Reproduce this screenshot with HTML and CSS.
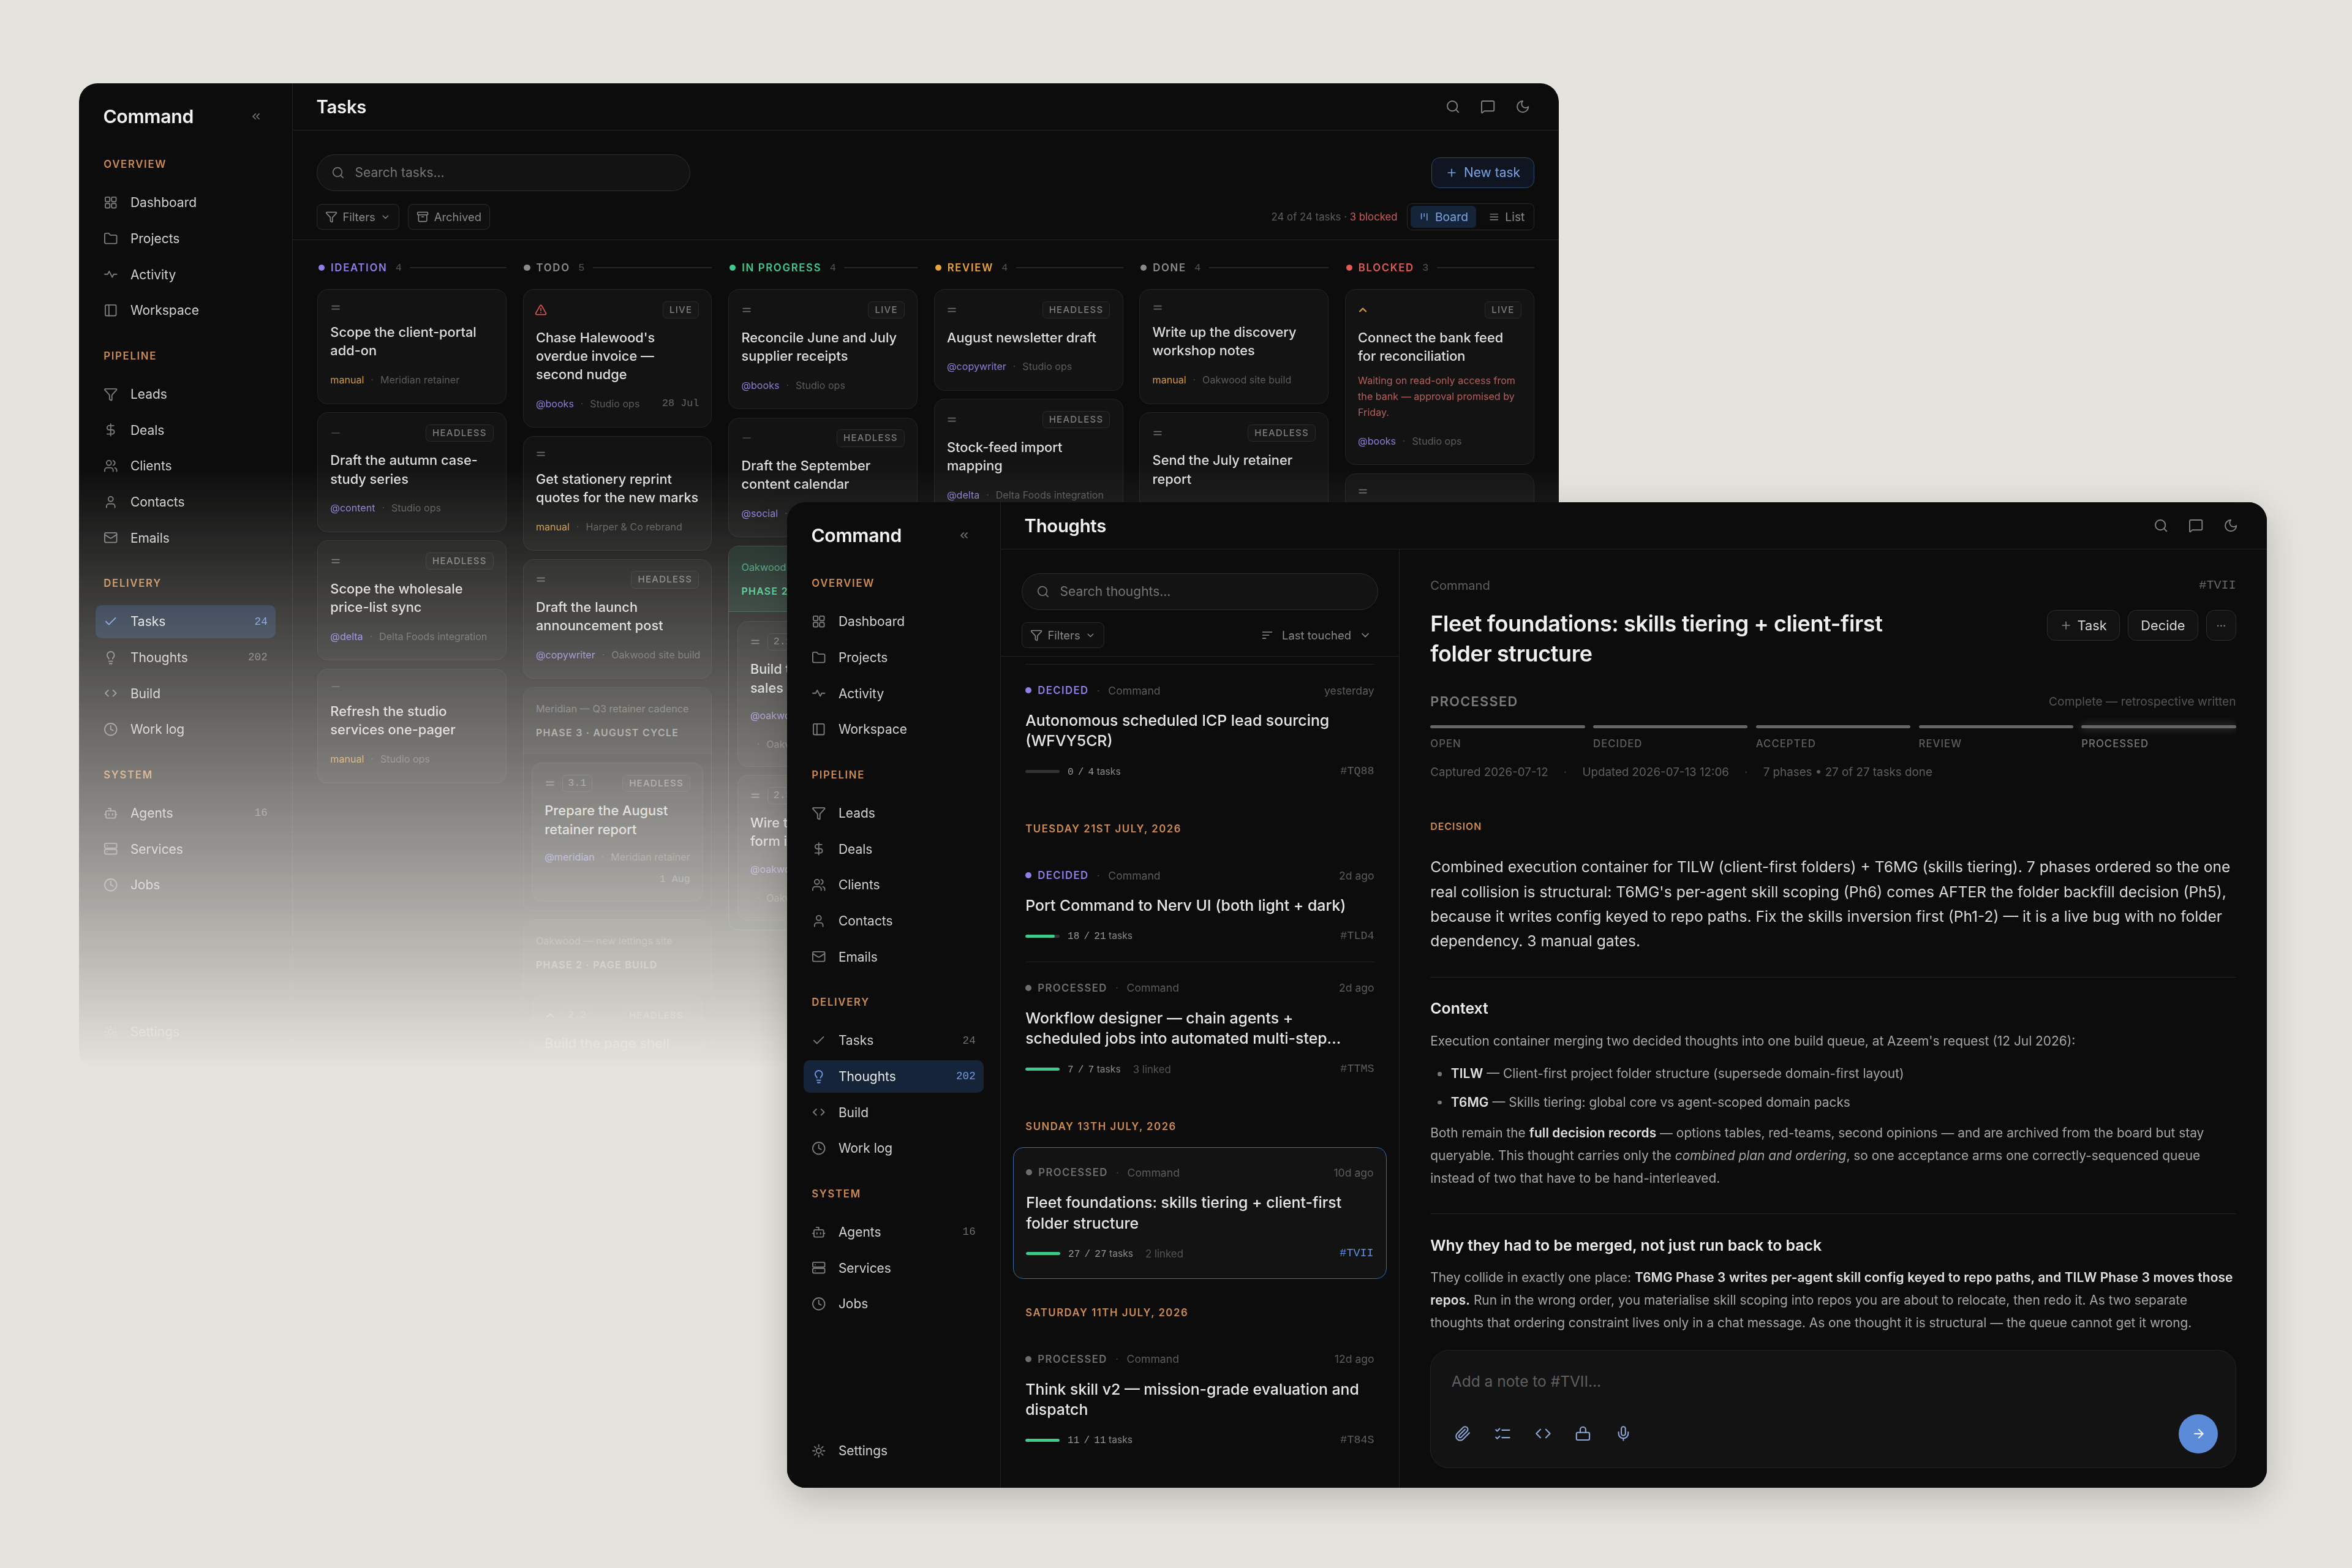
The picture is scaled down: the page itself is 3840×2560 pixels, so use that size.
FILE: index.html
```html
<!DOCTYPE html>
<html lang="en">
<head>
<meta charset="utf-8">
<title>Command</title>
<link rel="stylesheet" href="styles.css">
</head>
<body>
<svg class="sprite" xmlns="http://www.w3.org/2000/svg">
  <symbol id="i-dash" viewBox="0 0 24 24"><rect x="3" y="3" width="7.5" height="7.5" rx="1.5"/><rect x="13.5" y="3" width="7.5" height="7.5" rx="1.5"/><rect x="13.5" y="13.5" width="7.5" height="7.5" rx="1.5"/><rect x="3" y="13.5" width="7.5" height="7.5" rx="1.5"/></symbol>
  <symbol id="i-folder" viewBox="0 0 24 24"><path d="M20 20a2 2 0 0 0 2-2V8a2 2 0 0 0-2-2h-7.9a2 2 0 0 1-1.69-.9L9.6 3.9A2 2 0 0 0 7.93 3H4a2 2 0 0 0-2 2v13a2 2 0 0 0 2 2Z"/></symbol>
  <symbol id="i-activity" viewBox="0 0 24 24"><path d="M22 12h-5l-2.5 5L9.5 7 7 12H2"/></symbol>
  <symbol id="i-panel" viewBox="0 0 24 24"><rect x="3" y="3" width="18" height="18" rx="2"/><path d="M9 3v18"/></symbol>
  <symbol id="i-funnel" viewBox="0 0 24 24"><path d="M10 20a1 1 0 0 0 .553.895l2 1A1 1 0 0 0 14 21v-7a2 2 0 0 1 .517-1.341L21.74 4.67A1 1 0 0 0 21 3H3a1 1 0 0 0-.742 1.67l7.225 7.989A2 2 0 0 1 10 14z"/></symbol>
  <symbol id="i-dollar" viewBox="0 0 24 24"><path d="M12 2v20"/><path d="M17 5H9.5a3.5 3.5 0 0 0 0 7h5a3.5 3.5 0 0 1 0 7H6"/></symbol>
  <symbol id="i-users" viewBox="0 0 24 24"><path d="M16 21v-2a4 4 0 0 0-4-4H6a4 4 0 0 0-4 4v2"/><circle cx="9" cy="7" r="4"/><path d="M22 21v-2a4 4 0 0 0-3-3.87"/><path d="M16 3.13a4 4 0 0 1 0 7.75"/></symbol>
  <symbol id="i-user" viewBox="0 0 24 24"><path d="M19 21v-2a4 4 0 0 0-4-4H9a4 4 0 0 0-4 4v2"/><circle cx="12" cy="7" r="4"/></symbol>
  <symbol id="i-mail" viewBox="0 0 24 24"><rect x="2" y="4" width="20" height="16" rx="2"/><path d="m22 7-8.97 5.7a1.94 1.94 0 0 1-2.06 0L2 7"/></symbol>
  <symbol id="i-check" viewBox="0 0 24 24"><path d="M20 6 9 17l-5-5"/></symbol>
  <symbol id="i-bulb" viewBox="0 0 24 24"><path d="M15 14c.2-1 .7-1.7 1.5-2.5 1-.9 1.5-2.2 1.5-3.5A6 6 0 0 0 6 8c0 1 .2 2.2 1.5 3.5.7.7 1.3 1.5 1.5 2.5"/><path d="M9 18h6"/><path d="M10 22h4"/></symbol>
  <symbol id="i-code" viewBox="0 0 24 24"><path d="m8 7-5 5 5 5"/><path d="m16 7 5 5-5 5"/></symbol>
  <symbol id="i-code2" viewBox="0 0 24 24"><path d="m8 6-6 6 6 6"/><path d="m16 6 6 6-6 6"/></symbol>
  <symbol id="i-clock" viewBox="0 0 24 24"><circle cx="12" cy="12" r="10"/><path d="M12 6v6l4 2"/></symbol>
  <symbol id="i-bot" viewBox="0 0 24 24"><path d="M12 8V4H8"/><rect x="4" y="8" width="16" height="12" rx="2"/><path d="M2 14h2"/><path d="M20 14h2"/><path d="M15 13v2"/><path d="M9 13v2"/></symbol>
  <symbol id="i-server" viewBox="0 0 24 24"><rect x="2" y="3" width="20" height="8" rx="2"/><rect x="2" y="13" width="20" height="8" rx="2"/><path d="M6 7h.01"/><path d="M6 17h.01"/></symbol>
  <symbol id="i-gear" viewBox="0 0 24 24"><circle cx="12" cy="12" r="4"/><path d="M12 2v3"/><path d="M12 19v3"/><path d="m4.9 4.9 2.2 2.2"/><path d="m16.9 16.9 2.2 2.2"/><path d="M2 12h3"/><path d="M19 12h3"/><path d="m4.9 19.1 2.2-2.2"/><path d="m16.9 7.1 2.2-2.2"/></symbol>
  <symbol id="i-collapse" viewBox="0 0 24 24"><path d="m11 17-5-5 5-5"/><path d="m18 17-5-5 5-5"/></symbol>
  <symbol id="i-search" viewBox="0 0 24 24"><path d="m21 21-4.34-4.34"/><circle cx="11" cy="11" r="8"/></symbol>
  <symbol id="i-chat" viewBox="0 0 24 24"><path d="M22 17a2 2 0 0 1-2 2H6.828a2 2 0 0 0-1.414.586l-2.202 2.202A.71.71 0 0 1 2 21.286V5a2 2 0 0 1 2-2h16a2 2 0 0 1 2 2z"/></symbol>
  <symbol id="i-moon" viewBox="0 0 24 24"><path d="M12 3a6 6 0 0 0 9 9 9 9 0 1 1-9-9Z"/></symbol>
  <symbol id="i-archive" viewBox="0 0 24 24"><rect x="2" y="3" width="20" height="5" rx="1"/><path d="M4 8v11a2 2 0 0 0 2 2h12a2 2 0 0 0 2-2V8"/><path d="M10 12h4"/></symbol>
  <symbol id="i-down" viewBox="0 0 24 24"><path d="m6 9 6 6 6-6"/></symbol>
  <symbol id="i-plus" viewBox="0 0 24 24"><path d="M5 12h14"/><path d="M12 5v14"/></symbol>
  <symbol id="i-kanban" viewBox="0 0 24 24"><path d="M6 5v11"/><path d="M12 5v6"/><path d="M18 5v14"/></symbol>
  <symbol id="i-list" viewBox="0 0 24 24"><path d="M4 6h16"/><path d="M4 12h16"/><path d="M4 18h16"/></symbol>
  <symbol id="i-alert" viewBox="0 0 24 24"><path d="m21.73 18-8-14a2 2 0 0 0-3.48 0l-8 14A2 2 0 0 0 4 21h16a2 2 0 0 0 1.73-3"/><path d="M12 9v4"/><path d="M12 17h.01"/></symbol>
  <symbol id="i-eq" viewBox="0 0 24 24"><path d="M5 9h14"/><path d="M5 15h14"/></symbol>
  <symbol id="i-minus" viewBox="0 0 24 24"><path d="M5 12h14"/></symbol>
  <symbol id="i-up" viewBox="0 0 24 24"><path d="m6 15 6-6 6 6"/></symbol>
  <symbol id="i-sort" viewBox="0 0 24 24"><path d="M3 6h18"/><path d="M3 12h12"/><path d="M3 18h6"/></symbol>
  <symbol id="i-clip" viewBox="0 0 24 24"><path d="m21.44 11.05-9.19 9.19a6 6 0 0 1-8.49-8.49l8.57-8.57A4 4 0 1 1 18 8.84l-8.59 8.57a2 2 0 0 1-2.83-2.83l8.49-8.48"/></symbol>
  <symbol id="i-checks" viewBox="0 0 24 24"><path d="m2 17.5 2 2 3.5-3.5"/><path d="m2 6.5 2 2 3.5-3.5"/><path d="M11 7h11"/><path d="M11 18h11"/></symbol>
  <symbol id="i-lock" viewBox="0 0 24 24"><rect x="2.5" y="10.5" width="19" height="11" rx="2"/><path d="M8 10.5V6.5a4 4 0 0 1 8 0v4"/></symbol>
  <symbol id="i-mic" viewBox="0 0 24 24"><path d="M12 2a3 3 0 0 0-3 3v7a3 3 0 0 0 6 0V5a3 3 0 0 0-3-3Z"/><path d="M19 10v2a7 7 0 0 1-14 0v-2"/><path d="M12 19v3"/></symbol>
  <symbol id="i-arrow" viewBox="0 0 24 24"><path d="M5 12h14"/><path d="m12 5 7 7-7 7"/></symbol>
</svg>

<main class="stage">

<!-- BACK WINDOW: TASKS -->
<section class="window window-back">
<div class="app">
  <aside class="sidebar">
    <div class="brand"><span class="brand-name">Command</span><svg class="ic collapse"><use href="#i-collapse"/></svg></div>
    <div class="nav-label">OVERVIEW</div>
    <nav class="nav">
      <a class="nav-item"><svg class="ic"><use href="#i-dash"/></svg>Dashboard</a>
      <a class="nav-item"><svg class="ic"><use href="#i-folder"/></svg>Projects</a>
      <a class="nav-item"><svg class="ic"><use href="#i-activity"/></svg>Activity</a>
      <a class="nav-item"><svg class="ic"><use href="#i-panel"/></svg>Workspace</a>
    </nav>
    <div class="nav-label">PIPELINE</div>
    <nav class="nav">
      <a class="nav-item"><svg class="ic"><use href="#i-funnel"/></svg>Leads</a>
      <a class="nav-item"><svg class="ic"><use href="#i-dollar"/></svg>Deals</a>
      <a class="nav-item"><svg class="ic"><use href="#i-users"/></svg>Clients</a>
      <a class="nav-item"><svg class="ic"><use href="#i-user"/></svg>Contacts</a>
      <a class="nav-item"><svg class="ic"><use href="#i-mail"/></svg>Emails</a>
    </nav>
    <div class="nav-label">DELIVERY</div>
    <nav class="nav">
      <a class="nav-item active"><svg class="ic"><use href="#i-check"/></svg>Tasks<span class="count">24</span></a>
      <a class="nav-item"><svg class="ic"><use href="#i-bulb"/></svg>Thoughts<span class="count">202</span></a>
      <a class="nav-item"><svg class="ic"><use href="#i-code"/></svg>Build</a>
      <a class="nav-item"><svg class="ic"><use href="#i-clock"/></svg>Work log</a>
    </nav>
    <div class="nav-label">SYSTEM</div>
    <nav class="nav">
      <a class="nav-item"><svg class="ic"><use href="#i-bot"/></svg>Agents<span class="count">16</span></a>
      <a class="nav-item"><svg class="ic"><use href="#i-server"/></svg>Services</a>
      <a class="nav-item"><svg class="ic"><use href="#i-clock"/></svg>Jobs</a>
    </nav>
    <a class="nav-item settings"><svg class="ic"><use href="#i-gear"/></svg>Settings</a>
  </aside>

  <div class="main">
    <header class="topbar">
      <h1 class="page-title">Tasks</h1>
      <div class="top-icons"><svg class="ic"><use href="#i-search"/></svg><svg class="ic"><use href="#i-chat"/></svg><svg class="ic"><use href="#i-moon"/></svg></div>
    </header>
    <div class="toolbar">
      <div class="tool-row">
        <div class="search search-tasks"><svg class="ic"><use href="#i-search"/></svg>Search tasks...</div>
        <button class="btn-new"><svg class="ic"><use href="#i-plus"/></svg>New task</button>
      </div>
      <div class="tool-row tool-row-2">
        <div class="chips">
          <button class="chip"><svg class="ic"><use href="#i-funnel"/></svg>Filters<svg class="ic chev"><use href="#i-down"/></svg></button>
          <button class="chip"><svg class="ic"><use href="#i-archive"/></svg>Archived</button>
        </div>
        <div class="view-side">
          <span class="tally">24 of 24 tasks · <b>3 blocked</b></span>
          <div class="toggle">
            <span class="tab on"><svg class="ic"><use href="#i-kanban"/></svg>Board</span>
            <span class="tab"><svg class="ic"><use href="#i-list"/></svg>List</span>
          </div>
        </div>
      </div>
    </div>

    <div class="board">
      <div class="col">
        <div class="col-head c-ideation"><i class="dot"></i><span class="col-name">IDEATION</span><span class="col-n">4</span><span class="col-line"></span></div>
        <article class="card"><div class="card-top"><svg class="prio"><use href="#i-eq"/></svg></div><h3 class="card-title">Scope the client-portal add-on</h3><div class="card-meta"><span class="manual">manual</span><span class="sep">·</span><span>Meridian retainer</span></div></article>
        <article class="card"><div class="card-top"><svg class="prio low"><use href="#i-minus"/></svg><span class="badge">HEADLESS</span></div><h3 class="card-title">Draft the autumn case-study series</h3><div class="card-meta"><span class="who">@content</span><span class="sep">·</span><span>Studio ops</span></div></article>
        <article class="card"><div class="card-top"><svg class="prio"><use href="#i-eq"/></svg><span class="badge">HEADLESS</span></div><h3 class="card-title">Scope the wholesale price-list sync</h3><div class="card-meta"><span class="who">@delta</span><span class="sep">·</span><span>Delta Foods integration</span></div></article>
        <article class="card"><div class="card-top"><svg class="prio low"><use href="#i-minus"/></svg></div><h3 class="card-title">Refresh the studio services one-pager</h3><div class="card-meta"><span class="manual">manual</span><span class="sep">·</span><span>Studio ops</span></div></article>
      </div>

      <div class="col">
        <div class="col-head c-todo"><i class="dot"></i><span class="col-name">TODO</span><span class="col-n">5</span><span class="col-line"></span></div>
        <article class="card"><div class="card-top"><svg class="prio urgent"><use href="#i-alert"/></svg><span class="badge">LIVE</span></div><h3 class="card-title">Chase Halewood's overdue invoice — second nudge</h3><div class="card-meta"><span class="who">@books</span><span class="sep">·</span><span>Studio ops</span><span class="due">28 Jul</span></div></article>
        <article class="card"><div class="card-top"><svg class="prio"><use href="#i-eq"/></svg></div><h3 class="card-title">Get stationery reprint quotes for the new marks</h3><div class="card-meta"><span class="manual">manual</span><span class="sep">·</span><span>Harper &amp; Co rebrand</span></div></article>
        <article class="card"><div class="card-top"><svg class="prio"><use href="#i-eq"/></svg><span class="badge">HEADLESS</span></div><h3 class="card-title">Draft the launch announcement post</h3><div class="card-meta"><span class="who">@copywriter</span><span class="sep">·</span><span>Oakwood site build</span></div></article>
        <div class="phase">
          <div class="phase-head"><div class="phase-sub">Meridian — Q3 retainer cadence</div><div class="phase-name">PHASE 3 · AUGUST CYCLE</div></div>
          <div class="phase-body">
            <article class="card"><div class="card-top"><svg class="prio"><use href="#i-eq"/></svg><span class="step">3.1</span><span class="badge">HEADLESS</span></div><h3 class="card-title">Prepare the August retainer report</h3><div class="card-meta dated"><span class="who">@meridian</span><span class="sep">·</span><span>Meridian retainer</span><span class="due">1 Aug</span></div></article>
          </div>
        </div>
        <div class="phase">
          <div class="phase-head"><div class="phase-sub">Oakwood — new lettings site</div><div class="phase-name">PHASE 2 · PAGE BUILD</div></div>
          <div class="phase-body">
            <article class="card"><div class="card-top"><svg class="prio high"><use href="#i-up"/></svg><span class="step">2.2</span><span class="badge">HEADLESS</span></div><h3 class="card-title">Build the page shell</h3></article>
          </div>
        </div>
      </div>

      <div class="col">
        <div class="col-head c-progress"><i class="dot"></i><span class="col-name">IN PROGRESS</span><span class="col-n">4</span><span class="col-line"></span></div>
        <article class="card"><div class="card-top"><svg class="prio"><use href="#i-eq"/></svg><span class="badge">LIVE</span></div><h3 class="card-title">Reconcile June and July supplier receipts</h3><div class="card-meta"><span class="who">@books</span><span class="sep">·</span><span>Studio ops</span></div></article>
        <article class="card"><div class="card-top"><svg class="prio low"><use href="#i-minus"/></svg><span class="badge">HEADLESS</span></div><h3 class="card-title">Draft the September content calendar</h3><div class="card-meta"><span class="who">@social</span><span class="sep">·</span><span>Studio ops</span></div></article>
        <div class="phase phase-green">
          <div class="phase-head"><div class="phase-sub">Oakwood — new lettings site</div><div class="phase-name">PHASE 2 · PAGE BUILD</div></div>
          <div class="phase-body">
            <article class="card"><div class="card-top"><svg class="prio"><use href="#i-eq"/></svg><span class="step">2.1</span></div><h3 class="card-title">Build the new property sales page</h3><div class="card-meta wrap"><span class="who">@oakwood-dev</span><span class="sep">·</span><span>Oakwood site build</span></div></article>
            <article class="card"><div class="card-top"><svg class="prio"><use href="#i-eq"/></svg><span class="step">2.3</span></div><h3 class="card-title">Wire the new enquiry form into CRM</h3><div class="card-meta wrap"><span class="who">@oakwood-dev</span><span class="sep">·</span><span>Oakwood site build</span></div></article>
          </div>
        </div>
      </div>

      <div class="col">
        <div class="col-head c-review"><i class="dot"></i><span class="col-name">REVIEW</span><span class="col-n">4</span><span class="col-line"></span></div>
        <article class="card"><div class="card-top"><svg class="prio"><use href="#i-eq"/></svg><span class="badge">HEADLESS</span></div><h3 class="card-title">August newsletter draft</h3><div class="card-meta"><span class="who">@copywriter</span><span class="sep">·</span><span>Studio ops</span></div></article>
        <article class="card"><div class="card-top"><svg class="prio"><use href="#i-eq"/></svg><span class="badge">HEADLESS</span></div><h3 class="card-title">Stock-feed import mapping</h3><div class="card-meta"><span class="who">@delta</span><span class="sep">·</span><span>Delta Foods integration</span></div></article>
      </div>

      <div class="col">
        <div class="col-head c-done"><i class="dot"></i><span class="col-name">DONE</span><span class="col-n">4</span><span class="col-line"></span></div>
        <article class="card"><div class="card-top"><svg class="prio"><use href="#i-eq"/></svg></div><h3 class="card-title">Write up the discovery workshop notes</h3><div class="card-meta"><span class="manual">manual</span><span class="sep">·</span><span>Oakwood site build</span></div></article>
        <article class="card"><div class="card-top"><svg class="prio"><use href="#i-eq"/></svg><span class="badge">HEADLESS</span></div><h3 class="card-title">Send the July retainer report</h3><div class="card-meta"><span class="who">@meridian</span><span class="sep">·</span><span>Meridian retainer</span></div></article>
      </div>

      <div class="col">
        <div class="col-head c-blocked"><i class="dot"></i><span class="col-name">BLOCKED</span><span class="col-n">3</span><span class="col-line"></span></div>
        <article class="card"><div class="card-top"><svg class="prio high"><use href="#i-up"/></svg><span class="badge">LIVE</span></div><h3 class="card-title">Connect the bank feed for reconciliation</h3><p class="card-note">Waiting on read-only access from the bank — approval promised by Friday.</p><div class="card-meta"><span class="who">@books</span><span class="sep">·</span><span>Studio ops</span></div></article>
        <article class="card"><div class="card-top"><svg class="prio"><use href="#i-eq"/></svg></div><h3 class="card-title">Confirm the stock-feed format</h3></article>
      </div>
    </div>
  </div>
</div>
</section>

<!-- FRONT WINDOW: THOUGHTS -->
<section class="window window-front">
<div class="app">
  <aside class="sidebar">
    <div class="brand"><span class="brand-name">Command</span><svg class="ic collapse"><use href="#i-collapse"/></svg></div>
    <div class="nav-label">OVERVIEW</div>
    <nav class="nav">
      <a class="nav-item"><svg class="ic"><use href="#i-dash"/></svg>Dashboard</a>
      <a class="nav-item"><svg class="ic"><use href="#i-folder"/></svg>Projects</a>
      <a class="nav-item"><svg class="ic"><use href="#i-activity"/></svg>Activity</a>
      <a class="nav-item"><svg class="ic"><use href="#i-panel"/></svg>Workspace</a>
    </nav>
    <div class="nav-label">PIPELINE</div>
    <nav class="nav">
      <a class="nav-item"><svg class="ic"><use href="#i-funnel"/></svg>Leads</a>
      <a class="nav-item"><svg class="ic"><use href="#i-dollar"/></svg>Deals</a>
      <a class="nav-item"><svg class="ic"><use href="#i-users"/></svg>Clients</a>
      <a class="nav-item"><svg class="ic"><use href="#i-user"/></svg>Contacts</a>
      <a class="nav-item"><svg class="ic"><use href="#i-mail"/></svg>Emails</a>
    </nav>
    <div class="nav-label">DELIVERY</div>
    <nav class="nav">
      <a class="nav-item"><svg class="ic"><use href="#i-check"/></svg>Tasks<span class="count">24</span></a>
      <a class="nav-item active"><svg class="ic"><use href="#i-bulb"/></svg>Thoughts<span class="count">202</span></a>
      <a class="nav-item"><svg class="ic"><use href="#i-code"/></svg>Build</a>
      <a class="nav-item"><svg class="ic"><use href="#i-clock"/></svg>Work log</a>
    </nav>
    <div class="nav-label">SYSTEM</div>
    <nav class="nav">
      <a class="nav-item"><svg class="ic"><use href="#i-bot"/></svg>Agents<span class="count">16</span></a>
      <a class="nav-item"><svg class="ic"><use href="#i-server"/></svg>Services</a>
      <a class="nav-item"><svg class="ic"><use href="#i-clock"/></svg>Jobs</a>
    </nav>
    <a class="nav-item settings"><svg class="ic"><use href="#i-gear"/></svg>Settings</a>
  </aside>

  <div class="main">
    <header class="topbar">
      <h1 class="page-title">Thoughts</h1>
      <div class="top-icons"><svg class="ic"><use href="#i-search"/></svg><svg class="ic"><use href="#i-chat"/></svg><svg class="ic"><use href="#i-moon"/></svg></div>
    </header>
    <div class="split">
      <div class="list-pane">
        <div class="list-tools">
          <div class="search"><svg class="ic"><use href="#i-search"/></svg>Search thoughts...</div>
          <div class="tool-row tool-row-2">
            <button class="chip"><svg class="ic"><use href="#i-funnel"/></svg>Filters<svg class="ic chev"><use href="#i-down"/></svg></button>
            <span class="sorter"><svg class="ic"><use href="#i-sort"/></svg>Last touched<svg class="ic chev"><use href="#i-down"/></svg></span>
          </div>
        </div>
        <div class="list">
          <article class="item first">
            <div class="item-top"><i class="dot purple"></i><span class="st purple-t">DECIDED</span><span class="sep">·</span><span class="proj">Command</span><span class="when">yesterday</span></div>
            <h2 class="item-title">Autonomous scheduled ICP lead sourcing (WFVY5CR)</h2>
            <div class="item-foot"><span class="bar"></span><span class="prog"><span class="n">0 / 4</span> tasks</span><span class="code">#TQ88</span></div>
          </article>
          <h4 class="date">TUESDAY 21ST JULY, 2026</h4>
          <article class="item">
            <div class="item-top"><i class="dot purple"></i><span class="st purple-t">DECIDED</span><span class="sep">·</span><span class="proj">Command</span><span class="when">2d ago</span></div>
            <h2 class="item-title">Port Command to Nerv UI (both light + dark)</h2>
            <div class="item-foot"><span class="bar"><span class="fill f86"></span></span><span class="prog"><span class="n">18 / 21</span> tasks</span><span class="code">#TLD4</span></div>
          </article>
          <article class="item ruled">
            <div class="item-top"><i class="dot grey"></i><span class="st">PROCESSED</span><span class="sep">·</span><span class="proj">Command</span><span class="when">2d ago</span></div>
            <h2 class="item-title">Workflow designer — chain agents + scheduled jobs into automated multi-step...</h2>
            <div class="item-foot"><span class="bar"><span class="fill"></span></span><span class="prog"><span class="n">7 / 7</span> tasks</span><span class="linked">3 linked</span><span class="code">#TTMS</span></div>
          </article>
          <h4 class="date">SUNDAY 13TH JULY, 2026</h4>
          <article class="item selected">
            <div class="item-top"><i class="dot grey"></i><span class="st">PROCESSED</span><span class="sep">·</span><span class="proj">Command</span><span class="when">10d ago</span></div>
            <h2 class="item-title">Fleet foundations: skills tiering + client-first folder structure</h2>
            <div class="item-foot"><span class="bar"><span class="fill"></span></span><span class="prog"><span class="n">27 / 27</span> tasks</span><span class="linked">2 linked</span><span class="code code-on">#TVII</span></div>
          </article>
          <h4 class="date">SATURDAY 11TH JULY, 2026</h4>
          <article class="item">
            <div class="item-top"><i class="dot grey"></i><span class="st">PROCESSED</span><span class="sep">·</span><span class="proj">Command</span><span class="when">12d ago</span></div>
            <h2 class="item-title">Think skill v2 — mission-grade evaluation and dispatch</h2>
            <div class="item-foot"><span class="bar"><span class="fill"></span></span><span class="prog"><span class="n">11 / 11</span> tasks</span><span class="code">#T84S</span></div>
          </article>
        </div>
      </div>

      <div class="detail">
        <div class="detail-scroll">
          <div class="crumb"><span>Command</span><span class="crumb-code">#TVII</span></div>
          <div class="head-row">
            <h2 class="detail-title">Fleet foundations: skills tiering + client-first folder structure</h2>
            <div class="actions">
              <button class="act"><svg class="ic"><use href="#i-plus"/></svg>Task</button>
              <button class="act">Decide</button>
              <button class="act act-more">···</button>
            </div>
          </div>
          <div class="state-row"><span class="state">PROCESSED</span><span class="state-note">Complete — retrospective written</span></div>
          <div class="steps">
            <div class="stp"><span class="stp-bar"></span><span class="stp-name">OPEN</span></div>
            <div class="stp"><span class="stp-bar"></span><span class="stp-name">DECIDED</span></div>
            <div class="stp"><span class="stp-bar"></span><span class="stp-name">ACCEPTED</span></div>
            <div class="stp"><span class="stp-bar"></span><span class="stp-name">REVIEW</span></div>
            <div class="stp now"><span class="stp-bar"></span><span class="stp-name">PROCESSED</span></div>
          </div>
          <div class="facts"><span>Captured 2026-07-12</span><i>·</i><span>Updated 2026-07-13 12:06</span><i>·</i><span>7 phases • 27 of 27 tasks done</span></div>
          <div class="decision-label">DECISION</div>
          <p class="decision">Combined execution container for TILW (client-first folders) + T6MG (skills tiering). 7 phases ordered so the one real collision is structural: T6MG's per-agent skill scoping (Ph6) comes AFTER the folder backfill decision (Ph5), because it writes config keyed to repo paths. Fix the skills inversion first (Ph1-2) — it is a live bug with no folder dependency. 3 manual gates.</p>
          <hr class="rule">
          <h3 class="sec">Context</h3>
          <p class="body-p first-p">Execution container merging two decided thoughts into one build queue, at Azeem's request (12 Jul 2026):</p>
          <ul class="bul">
            <li><strong>TILW</strong> — Client-first project folder structure (supersede domain-first layout)</li>
            <li><strong>T6MG</strong> — Skills tiering: global core vs agent-scoped domain packs</li>
          </ul>
          <p class="body-p">Both remain the <strong>full decision records</strong> — options tables, red-teams, second opinions — and are archived from the board but stay queryable. This thought carries only the <em>combined plan and ordering</em>, so one acceptance arms one correctly-sequenced queue instead of two that have to be hand-interleaved.</p>
          <hr class="rule rule-2">
          <h3 class="sec">Why they had to be merged, not just run back to back</h3>
          <p class="body-p first-p">They collide in exactly one place: <strong>T6MG Phase 3 writes per-agent skill config keyed to repo paths, and TILW Phase 3 moves those repos.</strong> Run in the wrong order, you materialise skill scoping into repos you are about to relocate, then redo it. As two separate thoughts that ordering constraint lives only in a chat message. As one thought it is structural — the queue cannot get it wrong.</p>
        </div>
        <div class="composer">
          <div class="placeholder">Add a note to #TVII...</div>
          <div class="comp-row">
            <div class="comp-icons"><svg class="ic"><use href="#i-clip"/></svg><svg class="ic"><use href="#i-checks"/></svg><svg class="ic"><use href="#i-code2"/></svg><svg class="ic"><use href="#i-lock"/></svg><svg class="ic"><use href="#i-mic"/></svg></div>
            <button class="send"><svg class="ic"><use href="#i-arrow"/></svg></button>
          </div>
        </div>
      </div>
    </div>
  </div>
</div>
</section>
</main>
</body>
</html>
```
FILE: styles.css
```css
* { box-sizing: border-box; }
html, body { margin: 0; padding: 0; background: #e5e3dd; }
body { width: 3840px; height: 2560px; overflow: hidden; font-family: "Inter", "Liberation Sans", sans-serif; color: #e8e8e8; }
.sprite { position: absolute; width: 0; height: 0; }
.stage { position: relative; width: 3840px; height: 2560px; }

/* free-canvas windows */
.window { position: absolute; width: 2416px; height: 1609px; border-radius: 30px; overflow: hidden; background: #0c0c0c; }
.window-back { left: 129px; top: 136px; -webkit-mask-image: linear-gradient(to bottom, #000 0, #000 39%, transparent 100%); mask-image: linear-gradient(to bottom, #000 0, #000 39%, transparent 100%); }
.window-front { left: 1285px; top: 820px; box-shadow: 0 16px 60px rgba(0,0,0,.2); }
.app { zoom: 1.6778; width: 1440px; height: 959px; display: flex; background: #0c0c0c; overflow: hidden; }

.ic { width: 14px; height: 14px; flex: none; fill: none; stroke: currentColor; stroke-width: 1.9; stroke-linecap: round; stroke-linejoin: round; }

/* sidebar */
.sidebar { width: 208px; flex: none; display: flex; flex-direction: column; border-right: 1px solid #222; padding: 0 16px 20px; }
.brand { height: 64px; margin: 0 0 8px; padding: 0 8px 0 7.5px; display: flex; align-items: center; justify-content: space-between; }
.brand-name { font-size: 18px; font-weight: 600; letter-spacing: -.01em; color: #f2f2f2; }
.collapse { width: 12px; height: 12px; color: #777; margin-right: 5px; }
.nav-label { height: 14px; line-height: 14px; padding: 0 8px; font-size: 10px; font-weight: 600; letter-spacing: .1em; color: #cf8c50; margin-bottom: 14px; }
.nav { display: flex; flex-direction: column; gap: 3px; margin-bottom: 21.4px; }
.nav-item { display: flex; align-items: center; gap: 12px; height: 32px; padding: 0 8px; border-radius: 6px; font-size: 12.5px; color: #d2d2d2; }
.nav-item .ic { color: #7c7c7c; }
.nav-item.active { background: #16243a; color: #e8e8e8; }
.nav-item.active .ic, .nav-item.active .count { color: #6f9ce6; }
.count { margin-left: auto; font-family: "Liberation Mono", monospace; font-size: 10.5px; color: #707070; }
.settings { margin-top: auto; }

/* main */
.main { flex: 1; min-width: 0; display: flex; flex-direction: column; }
.topbar { height: 46px; flex: none; display: flex; align-items: center; justify-content: space-between; padding: 0 28px 0 23px; border-bottom: 1px solid #222; }
.page-title { margin: 0; font-size: 17.5px; font-weight: 600; color: #f0f0f0; letter-spacing: -.01em; }
.top-icons { display: flex; gap: 19.5px; color: #808080; }
.top-icons .ic { width: 14.5px; height: 14.5px; }

.toolbar { flex: none; padding: 23px 24px 9px 23px; border-bottom: 1px solid #222; }
.tool-row { display: flex; align-items: center; justify-content: space-between; }
.tool-row-2 { margin-top: 12px; }
.search { height: 36px; display: flex; align-items: center; gap: 10px; padding: 0 14px; border: 1px solid #2e2e2e; border-radius: 18px; background: #131313; font-size: 12.5px; color: #777; }
.search .ic { width: 13px; height: 13px; color: #777; }
.search-tasks { width: 364px; }
.btn-new { height: 30px; width: 100px; display: flex; align-items: center; justify-content: center; gap: 6px; border: 1px solid #2d4970; border-radius: 8px; background: #0f1622; color: #7ba4e6; font: 400 12.5px "Inter", sans-serif; }
.btn-new .ic { width: 12px; height: 12px; }
.chips { display: flex; gap: 8px; }
.chip { height: 25px; display: flex; align-items: center; gap: 5px; padding: 0 8px; border: 1px solid #2a2a2a; border-radius: 5px; background: #101010; color: #8a8a8a; font: 400 11px "Inter", sans-serif; }
.chip .ic { width: 12px; height: 12px; }
.chip .chev, .sorter .chev { width: 10px; height: 10px; }
.view-side { display: flex; align-items: center; gap: 9px; }
.tally { font-size: 10px; color: #5f5f5f; }
.tally b { font-weight: 400; color: #d05a5a; }
.toggle { height: 26px; width: 124px; display: flex; align-items: center; gap: 4px; padding: 2px 3px; border: 1px solid #2a2a2a; border-radius: 5px; }
.tab { height: 21px; display: flex; align-items: center; gap: 5px; padding: 0 8px; border-radius: 4px; font-size: 11.5px; color: #8a8a8a; }
.tab .ic { width: 11px; height: 11px; }
.tab.on { background: #16243a; color: #7ba4e6; }

/* board */
.board { flex: 1; min-height: 0; display: grid; grid-template-columns: repeat(6, 184px); gap: 16px; padding: 20px 24px 0; overflow: hidden; }
.col { display: flex; flex-direction: column; gap: 8px; min-width: 0; }
.col-head { height: 14px; margin-bottom: 6px; display: flex; align-items: center; gap: 6px; padding-left: 1px; font-size: 10px; font-weight: 600; letter-spacing: .1em; color: #8a8a8a; }
.dot { width: 6px; height: 6px; border-radius: 50%; background: currentColor; flex: none; display: block; }
.col-n { font-family: "Liberation Mono", monospace; font-weight: 400; color: #555; letter-spacing: 0; font-size: 10px; margin-left: 2px; }
.col-line { flex: 1; height: 1px; background: #262626; margin-left: 2px; }
.col-name { white-space: nowrap; }
.c-ideation { color: #8f7fe8; }
.c-progress { color: #3ecb8d; }
.c-review { color: #e8a53a; }
.c-done { color: #8a8a8a; }
.c-blocked { color: #e05a5a; }

.card { flex: none; background: #131313; border: 1px solid #242424; border-radius: 10px; padding: 11px 12px 15.5px; }
.card-top { min-height: 11px; display: flex; align-items: center; gap: 6px; margin-bottom: 9px; }
.prio { width: 12px; height: 12px; flex: none; fill: none; stroke: #6c6c6c; stroke-width: 2; stroke-linecap: round; stroke-linejoin: round; margin-left: -1px; }
.prio.low { stroke: #444; }
.prio.high { stroke: #d99a3a; stroke-width: 2.6; }
.prio.urgent { stroke: #d9534f; stroke-width: 2.2; }
.badge { margin-left: auto; height: 17px; padding: 0 6px; line-height: 15px; border: 1px solid #2a2a2a; border-radius: 4px; background: #171717; font-size: 9px; font-weight: 500; letter-spacing: .08em; color: #7d7d7d; }
.step { height: 17px; padding: 0 5px; line-height: 15px; border: 1px solid #2e2e2e; border-radius: 4px; font-family: "Liberation Mono", monospace; font-size: 10px; color: #777; }
.card-title { margin: 0; font-size: 13px; font-weight: 500; line-height: 18px; color: #dedede; }
.card-note { margin: 8px 0 0; font-size: 9.6px; line-height: 15.4px; color: #b4605c; }
.card-meta { display: flex; align-items: center; margin-top: 12px; min-height: 15px; font-size: 9.6px; color: #5c5c5c; white-space: nowrap; }
.card-meta.wrap { flex-wrap: wrap; }
.card-meta.wrap .who { width: 100%; margin-bottom: 16px; }
.card-meta.dated { flex-wrap: wrap; }
.card-meta.dated .due { width: 100%; text-align: right; margin-top: 10px; }
.who { color: #8c7fd8; }
.manual { color: #d59a3a; }
.sep { margin: 0 6.5px; color: #444; }
.due { margin-left: auto; font-family: "Liberation Mono", monospace; font-size: 10px; color: #666; }

.phase { flex: none; border: 1px solid #242424; border-radius: 10px; overflow: hidden; }
.phase-head { height: 64px; padding: 13px 12px 0; border-bottom: 1px solid #2a2a2a; background: #131313; }
.phase-sub { font-size: 9.7px; line-height: 15px; color: #5f5f5f; white-space: nowrap; }
.phase-name { margin-top: 9px; font-size: 9.5px; line-height: 14px; font-weight: 600; letter-spacing: .08em; color: #8a8a8a; white-space: nowrap; }
.phase-body { padding: 9px 8px; display: flex; flex-direction: column; gap: 8px; }
.phase-green { border-color: #1f4a38; }
.phase-green .phase-head { background: #10201a; border-bottom-color: #1f4a38; }
.phase-green .phase-sub { color: #3b9a72; }
.phase-green .phase-name { color: #3ecb8d; }

/* split */
.split { flex: 1; min-height: 0; display: flex; }
.list-pane { width: 388px; flex: none; display: flex; flex-direction: column; border-right: 1px solid #222; min-height: 0; }
.list-tools { flex: none; padding: 23px 20px 8px; border-bottom: 1px solid #222; height: 104px; }
.sorter { display: flex; align-items: center; gap: 8px; padding-right: 6.5px; font-size: 11px; color: #8a8a8a; }
.sorter .ic { width: 12px; height: 12px; }
.list { flex: 1; min-height: 0; overflow: hidden; padding: 7.5px 24px 0; }
.item { padding: 18px 0; }
.item.first, .item.ruled { border-top: 1px solid #222; }
.item-top { display: flex; align-items: center; height: 14px; font-size: 10.5px; }
.item-top .dot { margin-right: 6px; }
.purple { color: #8f7fe8; }
.grey { color: #6e6e6e; }
.st { font-size: 10px; font-weight: 600; letter-spacing: .08em; color: #6e6e6e; }
.purple-t { color: #8f7fe8; }
.proj { color: #5c5c5c; }
.item-top .sep { margin: 0 8px; }
.when { margin-left: auto; color: #5c5c5c; }
.item-title { margin: 12.5px 0 0; padding-right: 5px; font-size: 14.8px; line-height: 20px; font-weight: 500; color: #e6e6e6; }
.item-foot { display: flex; align-items: center; margin-top: 12.5px; height: 14px; }
.bar { width: 33px; height: 3px; border-radius: 2px; background: #333; margin-right: 8px; overflow: hidden; display: block; flex: none; }
.fill { display: block; height: 100%; width: 100%; background: #3ecb8d; border-radius: 2px; }
.f86 { width: 86%; }
.prog { font-size: 9.3px; color: #8a8a8a; }
.n { font-family: "Liberation Mono", monospace; font-size: 9.6px; word-spacing: -1.5px; color: #9a9a9a; }
.linked { margin-left: 12px; font-size: 10px; color: #555; }
.code { margin-left: auto; font-family: "Liberation Mono", monospace; font-size: 11px; color: #5f5f5f; }
.code-on { color: #5f8fdc; }
.date { margin: 0; padding: 24px 0 13px; height: 51px; font-size: 10px; font-weight: 600; letter-spacing: .09em; line-height: 14px; color: #cf8c50; }
.selected { margin: 0 -12px; padding: 17px 12px; background: #131313; border: 1px solid #3d6ca8; border-radius: 10px; }
.selected + .date { padding-top: 26px; height: 53px; }

/* detail */
.detail { flex: 1; min-width: 0; display: flex; flex-direction: column; padding: 0 30px 19px; }
.detail-scroll { flex: 1; min-height: 0; overflow: hidden; padding-top: 28px; }
.crumb { display: flex; justify-content: space-between; font-size: 12px; line-height: 14px; color: #5f5f5f; }
.crumb-code { font-family: "Liberation Mono", monospace; color: #6a6a6a; }
.head-row { display: flex; justify-content: space-between; margin-top: 16px; }
.detail-title { margin: 0; max-width: 470px; font-size: 21.4px; line-height: 29px; font-weight: 600; color: #f0f0f0; letter-spacing: -.01em; }
.actions { display: flex; gap: 8px; margin-top: 1px; }
.act { height: 30px; display: flex; align-items: center; gap: 5px; padding: 0 12px; border: 1px solid #2e2e2e; border-radius: 8px; background: #121212; color: #d6d6d6; font: 400 13px "Inter", sans-serif; }
.act .ic { width: 12px; height: 12px; color: #888; }
.act-more { width: 29px; justify-content: center; padding: 0; color: #888; font-size: 11px; }
.state-row { display: flex; justify-content: space-between; align-items: center; margin-top: 24px; height: 16px; }
.state { font-size: 13px; font-weight: 600; letter-spacing: .06em; color: #7a7a7a; }
.state-note { font-size: 11.5px; color: #555; }
.steps { display: grid; grid-template-columns: repeat(5, 1fr); gap: 8px; margin-top: 15px; }
.stp { display: flex; flex-direction: column; gap: 9px; }
.stp-bar { display: block; height: 3px; border-radius: 2px; background: #666; }
.now .stp-bar { box-shadow: 0 0 8px rgba(170,170,170,.45); }
.stp-name { font-size: 10px; font-weight: 500; letter-spacing: .06em; line-height: 12px; color: #5f5f5f; }
.now .stp-name { color: #777; }
.facts { display: flex; gap: 15px; margin-top: 15px; font-size: 11.2px; line-height: 14px; color: #5f5f5f; }
.facts i { font-style: normal; color: #3c3c3c; }
.decision-label { margin-top: 39px; font-size: 9.5px; font-weight: 600; letter-spacing: .06em; line-height: 14px; color: #cf8c50; }
.decision { margin: 20px 0 0; font-size: 14.7px; line-height: 24px; color: #d8d8d8; }
.rule { border: 0; border-top: 1px solid #222; margin: 23px 0 0; }
.rule-2 { margin-top: 23px; }
.sec { margin: 21px 0 0; font-size: 14.8px; line-height: 18px; font-weight: 600; color: #ececec; }
.body-p { margin: 8px 0 0; font-size: 12.45px; line-height: 22px; color: #a6a6a6; }
.first-p { margin-top: 12px; }
.body-p strong, .bul strong { font-weight: 600; color: #e0e0e0; letter-spacing: .07px; }
.bul { margin: 10px 0 0; padding: 0 0 0 20px; font-size: 12.45px; line-height: 22px; color: #a6a6a6; list-style: none; }
.bul li { margin-bottom: 5.7px; }
.bul li::before { content: ""; display: inline-block; width: 4px; height: 4px; margin: 0 9px 2px -13px; border-radius: 50%; background: #777; }
.composer { flex: none; height: 115px; margin-top: 10px; padding: 20px 20px 14px; border: 1px solid #242424; border-radius: 18px; background: #131313; display: flex; flex-direction: column; justify-content: space-between; }
.placeholder { font-size: 14.6px; line-height: 20px; color: #5f5f5f; }
.comp-row { display: flex; align-items: center; justify-content: space-between; }
.comp-icons { display: flex; gap: 23px; margin-left: 3px; color: #8aa6d6; }
.comp-icons .ic { width: 16px; height: 16px; }
.send { width: 38px; height: 38px; padding: 0; margin-right: -3px; border: 0; border-radius: 50%; background: #5b8ad8; color: #fff; display: flex; align-items: center; justify-content: center; }
.send .ic { width: 14px; height: 14px; }
```
